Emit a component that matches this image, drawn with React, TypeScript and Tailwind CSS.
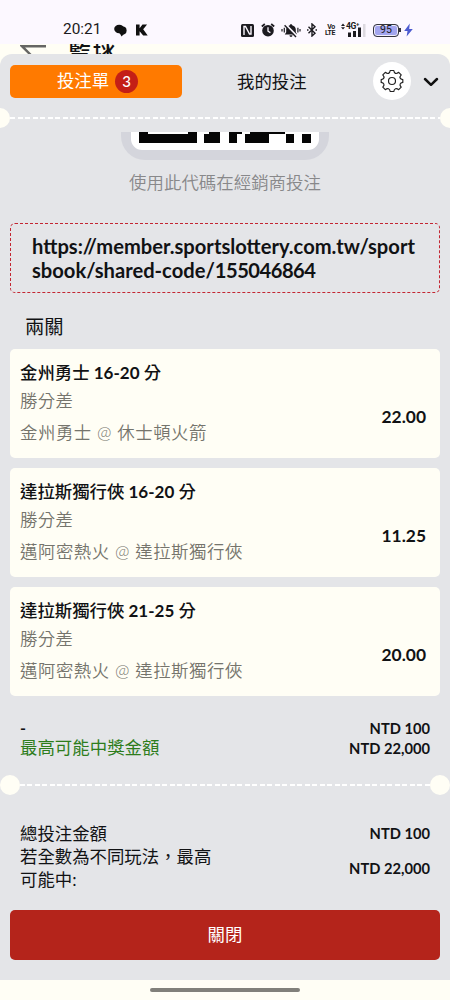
import React from 'react';

type Bet = { team: string; margin: string; match: string; odds: string };

const bets: Bet[] = [
  { team: '金州勇士', margin: '16-20', match: '金州勇士 @ 休士頓火箭', odds: '22.00' },
  { team: '達拉斯獨行俠', margin: '16-20', match: '邁阿密熱火 @ 達拉斯獨行俠', odds: '11.25' },
  { team: '達拉斯獨行俠', margin: '21-25', match: '邁阿密熱火 @ 達拉斯獨行俠', odds: '20.00' },
];

function StatusBar() {
  return (
    <div className="h-[44px] bg-[#fcf8ff] text-[#1c1b20]">
      <div className="flex h-[44px] items-center pt-[16px] pl-[63px]">
        <span className="w-[51px] font-['Roboto',sans-serif] text-[15.4px] leading-none">20:21</span>
        <svg width="13" height="13" viewBox="0 0 13 13" className="shrink-0" fill="#111">
          <ellipse cx="5.200" cy="5" rx="5" ry="4.200" />
          <ellipse cx="8.600" cy="6.500" rx="4" ry="4" />
          <path d="M5.500 8.500 7.500 12.500l3-3z" />
        </svg>
        <svg width="13" height="12" viewBox="0 0 13 12" className="ml-[8px] shrink-0" fill="#111">
          <path d="M1 .6h3.600v3.700L7.500.600h4.600L8.200 5.200l4.500 6.200H8.200L4.600 7.300v4.100H1z" />
        </svg>
        <div className="ml-[93px] flex h-[18px] items-center">
          <svg width="13" height="13" viewBox="0 0 13 13" className="shrink-0">
            <rect width="13" height="13" rx="1.500" fill="#1c1b20" />
            <path d="M3 11V2.500h1.500l4 7.500H10V2" fill="none" stroke="#fcf8ff" strokeWidth="1.400" />
          </svg>
          <svg width="14" height="14" viewBox="0 0 14 14" className="ml-[7px] shrink-0">
            <circle cx="7" cy="7.700" r="5.800" fill="#1c1b20" />
            <path d="M.8 3.500 3.800 1M13.200 3.500 10.200 1" stroke="#1c1b20" strokeWidth="1.700" />
            <path d="M7 4.200v4l2.400 1.400" stroke="#fcf8ff" strokeWidth="1.300" fill="none" />
          </svg>
          <svg width="20" height="15" viewBox="0 0 20 15" className="ml-[6px] shrink-0">
            <path d="M10 1.200c-.8 0-1.200.5-1.200 1C6.600 2.800 5.200 4.600 5.200 6.500v2.700L3.800 11.500h12.400l-1.400-2.300V6.500c0-2-1.500-3.700-3.600-4.300 0-.5-.4-1-1.200-1zM8.500 12.300h3c0 1-.7 1.700-1.500 1.700s-1.500-.7-1.500-1.700z" fill="#1c1b20" />
            <path d="M4.300 1.300 16 13.200" stroke="#fcf8ff" strokeWidth="2.200" />
            <path d="M3.600 2.300 15 13.900" stroke="#1c1b20" strokeWidth="1.400" />
            <path d="M1 6v2.500M3.300 4.800v4.800M19 6v2.500M16.900 4.800v4.800" stroke="#1c1b20" strokeWidth="1.200" />
          </svg>
          <svg width="10" height="14" viewBox="0 0 10 14" className="ml-[6px] shrink-0" fill="none" stroke="#1c1b20" strokeWidth="1.400">
            <path d="m1.500 3.800 6.500 6.400L5 13V1l3 2.800-6.500 6.400" />
            <path d="M0 7h1.500M8.500 7H10" />
          </svg>
          <div className="ml-[9px] w-[10px] text-center font-['Roboto',sans-serif] text-[7px] leading-[6.500px] font-bold tracking-[-0.500px]">
            <div>Vo</div>
            <div className="-ml-[2px]">LTE</div>
          </div>
          <div className="relative ml-[5px] h-[14px] w-[25px]">
            <svg width="25" height="14" viewBox="0 0 25 14">
              <path d="m0 3 2-2.500L4 3zM0 4.200l2 2.300 2-2.300z" fill="#1c1b20" />
              <path d="M7 9.500h3V14H7zM12 8h3v6h-3zM17 4.500h3V14h-3z" fill="#1c1b20" />
              <path d="M22 1h2.500v13H22z" fill="#dcd9df" />
            </svg>
            <span className="absolute -top-px left-[5px] font-['Roboto',sans-serif] text-[8.500px] leading-[8px] font-bold tracking-[-0.300px]">4G⁺</span>
          </div>
          <div className="ml-[7px] flex h-[13px] w-[26px] items-center justify-center rounded-[4px] border border-[#35343d] bg-[#a3a5ee] font-['Roboto',sans-serif] text-[10.500px] leading-none ring-1 ring-inset ring-[#efedfa]">95</div>
          <div className="h-[4px] w-[1.500px] bg-[#35343d]" />
          <svg width="9" height="14" viewBox="0 0 9 14" className="ml-[3px] shrink-0" fill="#4c5bd0">
            <path d="M5.800.500.200 8h3.300L2.600 13.500 8.800 5.900H5.200z" />
          </svg>
        </div>
      </div>
    </div>
  );
}

function DashedLine() {
  return (
    <div className="h-[2px] w-full bg-[repeating-linear-gradient(90deg,#ffffff_0px,#ffffff_5px,transparent_5px,transparent_7.500px)]" />
  );
}

function BetCard({ bet }: { bet: Bet }) {
  return (
    <div className="flex h-[109px] items-center justify-between rounded-[5px] bg-[#fffef5] pr-[14px] pl-[10px]">
      <div className="h-full pt-[12px]">
        <div className="h-6 text-[17.400px] leading-6 font-medium">
          {bet.team}
          <span className="text-[17px] font-bold"> {bet.margin} </span>分
        </div>
        <div className="mt-[4px] h-6 text-[17.400px] leading-6 font-[350] tracking-[0.400px] text-[#75746c]">勝分差</div>
        <div className="mt-[8px] h-6 text-[17.400px] leading-6 font-[350] tracking-[0.550px] text-[#75746c]">{bet.match}</div>
      </div>
      <div className="pt-[27px] text-[17.400px] leading-6 font-bold">{bet.odds}</div>
    </div>
  );
}

export default function App() {
  return (
    <div className="h-[1000px] w-[450px] overflow-hidden bg-[#fffef5] font-['Lato','Noto_Sans_CJK_TC',sans-serif] text-[#111214]">
      <StatusBar />
      <div className="flex h-[10px] items-start overflow-hidden pl-[20px]">
        <svg width="27" height="20" viewBox="0 0 27 20" className="mt-px shrink-0" fill="none" stroke="#666664" strokeWidth="2.400">
          <path d="M26 1.200H2l10 10" />
        </svg>
        <span className="-mt-[9px] ml-[21px] text-[23px] leading-[26px] font-medium tracking-[1.500px]">籃球</span>
      </div>
      <main className="h-[926px] overflow-hidden rounded-t-[12px] bg-[#e4e5e8]">
        <div className="flex h-[54px] items-center pl-[10px]">
          <button className="flex h-[33px] w-[172px] items-center justify-center gap-[6px] rounded-[5px] bg-[#ff7a00] pt-px pl-[3px] text-[17.400px] text-white">
            <span>投注單</span>
            <span className="flex size-[23px] items-center justify-center rounded-full bg-[#c41f16] text-[15px] leading-none font-medium">3</span>
          </button>
          <button className="ml-[55px] pt-[2px] text-[17.400px] leading-6">我的投注</button>
          <button className="ml-[66px] flex size-[38px] items-center justify-center rounded-full bg-white">
            <svg width="24" height="24" viewBox="0 0 24 24" fill="none" stroke="#222" strokeWidth="1.200" strokeLinejoin="round">
              <circle cx="12" cy="12" r="3.500" />
              <path d="M10.200 1.500h3.600c.2 1.700.7 2.500 1.700 2.900s2-.1 3.200-1.100l2.500 2.500c-1.100 1.300-1.500 2.200-1.100 3.200s1.200 1.400 2.700 1.600v2.800c-1.500.2-2.300.7-2.700 1.700s0 1.900 1.100 3.100l-2.500 2.500c-1.200-1-2.200-1.400-3.200-1s-1.500 1.200-1.700 2.800h-3.600c-.2-1.600-.7-2.400-1.700-2.800s-2 0-3.200 1l-2.500-2.500c1.100-1.200 1.500-2.100 1.100-3.100s-1.200-1.500-2.700-1.700v-2.800c1.500-.2 2.300-.6 2.700-1.600s0-1.900-1.100-3.200l2.500-2.500c1.200 1 2.200 1.500 3.200 1.100s1.500-1.200 1.700-2.900z" />
            </svg>
          </button>
          <svg width="16" height="10" viewBox="0 0 16 10" className="mt-[2px] ml-[12px]" fill="none" stroke="#111" strokeWidth="2.500" strokeLinecap="round" strokeLinejoin="round">
            <path d="m2 2 6 5.800L14 2" />
          </svg>
        </div>
        <div className="flex h-[20px] items-center">
          <div className="h-[20px] w-[10px] shrink-0 rounded-r-full bg-[#fffef5]" />
          <DashedLine />
          <div className="h-[20px] w-[10px] shrink-0 rounded-l-full bg-[#fffef5]" />
        </div>
        <div className="mt-[4px] flex h-[28px] justify-center">
          <div className="mr-px h-[28px] w-[208px] rounded-b-[24px] bg-[#d4d5dc] px-[10px]">
            <div className="flex h-[18px] justify-center rounded-b-[11px] bg-white">
              <svg width="172" height="11" viewBox="0 0 172 11" fill="#050505">
                <path d="M0 0h9v2h40V0h9v11H0zM65 2h5V0h11v11H65zM90 0h13v2h-5v9h-8zM106 2h5V0h35v2h-16v9h-24zM147 2h8v9h-8zM163 2h9v9h-9z" />
              </svg>
            </div>
          </div>
        </div>
        <div className="mt-[11px] h-6 text-center text-[17.450px] leading-6 font-[350] text-[#88888a]">使用此代碼在經銷商投注</div>
        <div className="mx-[10px] mt-[28px] flex h-[70px] items-center rounded-[5px] border border-dashed border-[#c32632] pl-[21px] text-[20.150px] leading-6 font-bold">
          <div>
            https://member.sportslottery.com.tw/sport
            <br />
            sbook/shared-code/<span className="tracking-[-0.500px]">155046864</span>
          </div>
        </div>
        <h2 className="mt-[21px] h-[26px] pl-[25px] text-[19.300px] leading-[26px] font-normal">兩關</h2>
        <div className="mx-[10px] mt-[9px] flex flex-col gap-[10px]">
          {bets.map((bet) => (
            <BetCard key={bet.team + bet.margin} bet={bet} />
          ))}
        </div>
        <div className="flex h-[78px] justify-between px-5 pt-[22px]">
          <div className="leading-5">
            <div className="text-[16px] font-bold">-</div>
            <div className="text-[17.450px] text-[#2e7d1c]">最高可能中獎金額</div>
          </div>
          <div className="text-right text-[14.700px] leading-5 font-bold">
            <div>NTD 100</div>
            <div>NTD 22,000</div>
          </div>
        </div>
        <div className="flex h-[21px] items-center">
          <div className="size-[20px] shrink-0 rounded-full bg-[#fffef5]" />
          <DashedLine />
          <div className="size-[20px] shrink-0 rounded-full bg-[#fffef5]" />
        </div>
        <div className="flex h-[115px] justify-between px-5 pt-[26px]">
          <div className="w-[200px] pt-px text-[17.400px] leading-[23px]">
            <div>總投注金額</div>
            <div>
              若全數為不同玩法，最高
              <br />
              可能中:
            </div>
          </div>
          <div className="text-right text-[14.700px] leading-6 font-bold">
            <div>NTD 100</div>
            <div className="mt-[11px]">NTD 22,000</div>
          </div>
        </div>
        <button className="mx-[10px] flex h-[50px] w-[430px] items-center justify-center rounded-[5px] bg-[#b4241b] pt-px text-[17.400px] text-white">關閉</button>
      </main>
      <div className="flex h-[20px] items-center justify-center">
        <div className="h-[4px] w-[150px] rounded-full bg-[#81807a]" />
      </div>
    </div>
  );
}
